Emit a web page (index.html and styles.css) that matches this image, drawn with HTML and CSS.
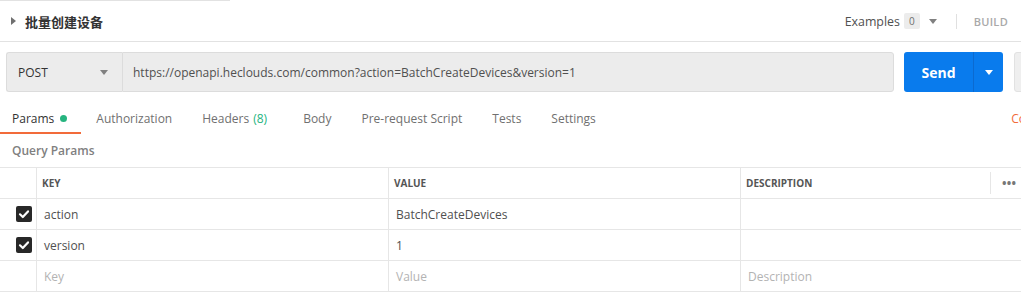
FILE: index.html
```html
<!DOCTYPE html>
<html>
<head>
<meta charset="utf-8">
<link rel="stylesheet" href="styles.css">
</head>
<body>
<div class="app">
  <div class="tabline"></div>
  <div class="header">
    <div class="title">
      <span class="caret-right"></span>
      <span class="name">批量创建设备</span>
    </div>
    <div class="header-right">
      <span class="examples">Examples</span>
      <span class="badge">0</span>
      <span class="caret-down grey"></span>
      <span class="vdivider"></span>
      <span class="build">BUILD</span>
    </div>
  </div>

  <div class="urlbar">
    <div class="method">
      <span>POST</span>
      <span class="caret-down grey"></span>
    </div>
    <div class="url">https://openapi.heclouds.com/common?action=BatchCreateDevices&amp;version=1</div>
    <div class="send">
      <span class="send-label">Send</span>
      <span class="send-arrow"><span class="caret-down white"></span></span>
    </div>
    <div class="save"></div>
  </div>

  <div class="tabs">
    <div class="tab active">Params <span class="dot"></span></div>
    <div class="tab">Authorization</div>
    <div class="tab wide">Headers <span class="green">(8)</span></div>
    <div class="tab">Body</div>
    <div class="tab">Pre-request Script</div>
    <div class="tab">Tests</div>
    <div class="tab">Settings</div>
    <div class="tab-spacer"></div>
    <div class="cookies">Cookies</div>
  </div>

  <div class="section-title">Query Params</div>

  <div class="table">
    <div class="row head">
      <div class="cell chk"></div>
      <div class="cell">KEY</div>
      <div class="cell">VALUE</div>
      <div class="cell desc-head"><span>DESCRIPTION</span><span class="more"><span class="hdiv"></span><span class="dots">•••</span></span></div>
    </div>
    <div class="row">
      <div class="cell chk"><span class="checkbox"><svg viewBox="0 0 16 16" width="16" height="16"><path d="M4 8.3 L6.8 11 L12 5.4" fill="none" stroke="#fff" stroke-width="2.2" stroke-linecap="round" stroke-linejoin="round"/></svg></span></div>
      <div class="cell text">action</div>
      <div class="cell text">BatchCreateDevices</div>
      <div class="cell text"></div>
    </div>
    <div class="row">
      <div class="cell chk"><span class="checkbox"><svg viewBox="0 0 16 16" width="16" height="16"><path d="M4 8.3 L6.8 11 L12 5.4" fill="none" stroke="#fff" stroke-width="2.2" stroke-linecap="round" stroke-linejoin="round"/></svg></span></div>
      <div class="cell text">version</div>
      <div class="cell text">1</div>
      <div class="cell text"></div>
    </div>
    <div class="row">
      <div class="cell chk"></div>
      <div class="cell text ph">Key</div>
      <div class="cell text ph">Value</div>
      <div class="cell text ph">Description</div>
    </div>
  </div>
</div>
</body>
</html>
```

FILE: styles.css
```css
html, body {
  margin: 0;
  padding: 0;
  background: #fff;
}
body {
  font-family: "Open Sans", "Noto Sans CJK SC", sans-serif;
  color: #505050;
  font-size: 12px;
  overflow: hidden;
  width: 1021px;
  height: 295px;
}
.app {
  width: 1021px;
  overflow: hidden;
}
.tabline {
  width: 230px;
  height: 1px;
  background: #e2e2e2;
}
.header {
  height: 40px;
  border-bottom: 1px solid #e2e2e2;
  display: flex;
  align-items: center;
  justify-content: space-between;
  padding: 0 13px 0 11px;
}
.title {
  display: flex;
  align-items: center;
}
.caret-right {
  width: 0;
  height: 0;
  border-top: 4px solid transparent;
  border-bottom: 4px solid transparent;
  border-left: 5px solid #707070;
  margin-right: 9px;
}
.name {
  font-size: 13px;
  color: #333;
  font-weight: 600;
  font-family: "Noto Sans CJK SC", sans-serif;
}
.header-right {
  display: flex;
  align-items: center;
}
.examples {
  font-size: 12.4px;
  color: #505050;
}
.badge {
  background: #ececec;
  color: #707070;
  font-size: 10px;
  padding: 1px 5px;
  margin-left: 4px;
  border-radius: 2px;
}
.caret-down {
  width: 0;
  height: 0;
  border-left: 4px solid transparent;
  border-right: 4px solid transparent;
  border-top: 5px solid #808080;
}
.header-right .caret-down {
  margin-left: 9px;
}
.caret-down.white {
  border-top-color: #fff;
}
.vdivider {
  width: 1px;
  height: 15px;
  background: #e0e0e0;
  margin: 0 17px 0 19px;
}
.build {
  font-size: 11px;
  color: #a9a9a9;
  font-weight: 600;
  letter-spacing: 0.3px;
}
.urlbar {
  display: flex;
  padding: 10px 0 0 6px;
  height: 40px;
}
.urlbar > div {
  flex-shrink: 0;
}
.method {
  width: 116px;
  box-sizing: border-box;
  height: 40px;
  background: #ececec;
  border: 1px solid #dcdcdc;
  border-right: none;
  border-radius: 3px 0 0 3px;
  display: flex;
  align-items: center;
  justify-content: space-between;
  padding: 0 14px 0 11px;
  font-size: 12px;
  color: #333;
}
.url {
  width: 772px;
  box-sizing: border-box;
  height: 40px;
  background: #ececec;
  border: 1px solid #dcdcdc;
  border-radius: 0 3px 3px 0;
  display: flex;
  align-items: center;
  padding-left: 10px;
  color: #505050;
  font-size: 12px;
}
.send {
  margin-left: 10px;
  width: 99px;
  height: 40px;
  background: #097bed;
  border-radius: 3px;
  display: flex;
  color: #fff;
}
.send-label {
  width: 69px;
  display: flex;
  align-items: center;
  justify-content: center;
  font-weight: 700;
  font-size: 14px;
  border-right: 1px solid #0b6ad0;
}
.send-arrow {
  flex: 1;
  display: flex;
  align-items: center;
  justify-content: center;
}
.save {
  margin-left: 11px;
  width: 40px;
  height: 40px;
  box-sizing: border-box;
  background: #efefef;
  border: 1px solid #e2e2e2;
  border-radius: 3px;
}
.tabs {
  display: flex;
  height: 31px;
  margin-top: 11px;
  align-items: stretch;
}
.tab {
  padding: 0 15px;
  display: flex;
  align-items: center;
  color: #707070;
  font-size: 12px;
}
.tab.wide {
  padding-right: 21px;
}
.tab.active {
  color: #333;
  border-bottom: 2px solid #f26b3a;
  padding-top: 2px;
  padding-left: 12px;
  padding-right: 14px;
}
.dot {
  width: 7px;
  height: 7px;
  border-radius: 50%;
  background: #26b47f;
  margin-left: 6px;
}
.green {
  color: #26b47f;
  margin-left: 4px;
}
.tab-spacer {
  flex: 1;
}
.cookies {
  display: flex;
  align-items: center;
  color: #f26b3a;
  font-size: 12px;
  margin-right: -34px;
}
.section-title {
  height: 33px;
  display: flex;
  align-items: center;
  padding-left: 12px;
  color: #808080;
  font-weight: 600;
  font-size: 12px;
}
.table {
  border-top: 1px solid #e6e6e6;
}
.row {
  display: grid;
  grid-template-columns: 37px 352px 352px 1fr;
  height: 30px;
  border-bottom: 1px solid #e6e6e6;
}
.cell {
  display: flex;
  align-items: center;
  border-right: 1px solid #e6e6e6;
  padding-left: 6px;
  overflow: hidden;
}
.cell:last-child {
  border-right: none;
}
.cell.chk {
  padding-left: 16px;
}
.row.head .cell {
  font-size: 10px;
  font-weight: 700;
  color: #555;
  padding-left: 5px;
}
.row.head .cell.chk {
  padding-left: 0;
}
.desc-head {
  justify-content: space-between;
}
.more {
  display: flex;
  align-items: center;
  height: 100%;
}
.hdiv {
  width: 1px;
  height: 22px;
  background: #e6e6e6;
  margin-right: 11px;
}
.dots {
  color: #777;
  font-size: 12px;
  letter-spacing: 0.3px;
  width: 19px;
}
.cell.text {
  padding-left: 7px;
  font-size: 12px;
  color: #505050;
}
.cell.ph {
  color: #b3b3b3;
}
.checkbox {
  width: 16px;
  height: 16px;
  background: #282828;
  border-radius: 2px;
  display: flex;
}
```
